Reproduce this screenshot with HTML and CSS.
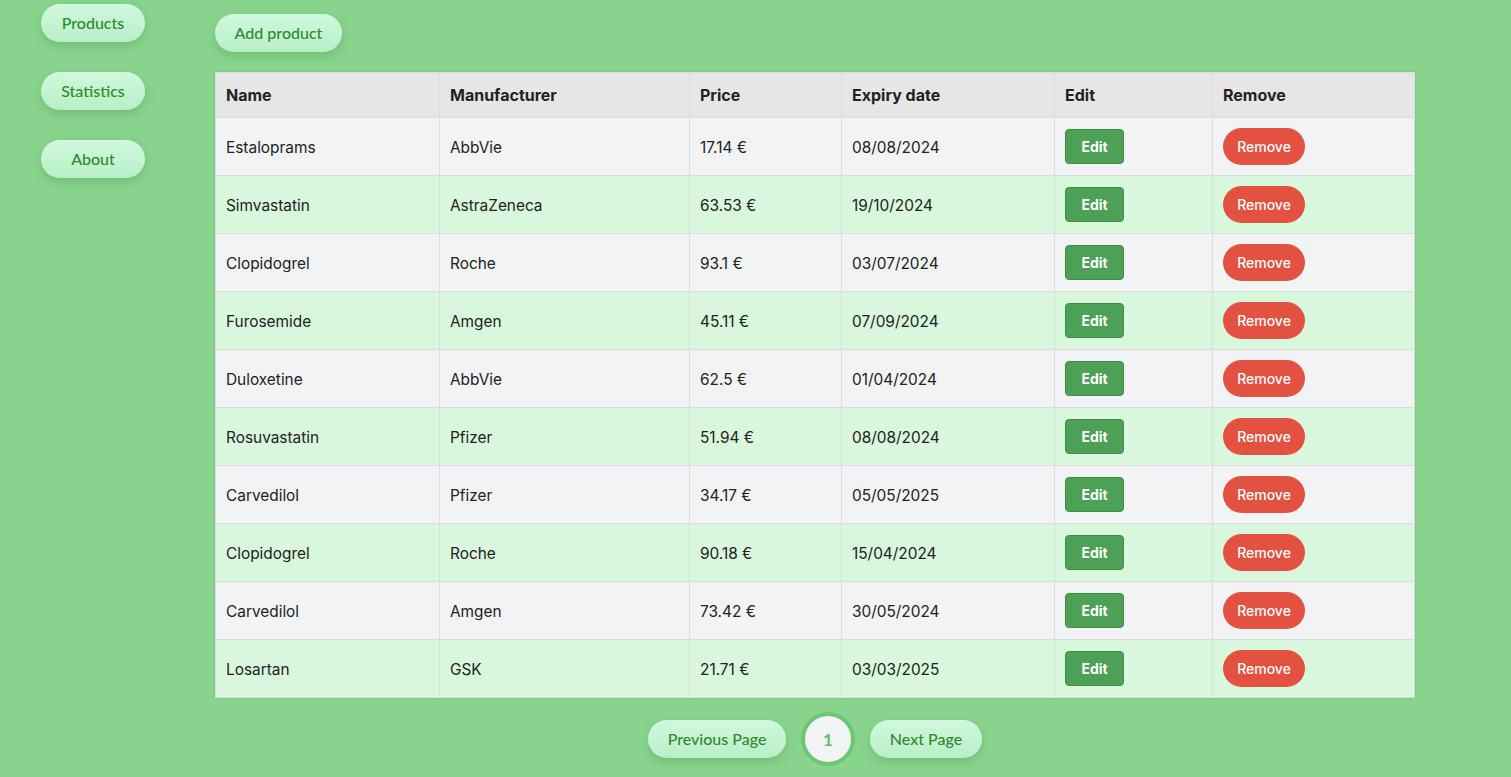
FILE: index.html
```html
<!DOCTYPE html>
<html>
<head>
<meta charset="utf-8">
<link rel="stylesheet" href="styles.css">
</head>
<body>
<div class="layout">
  <nav class="sidebar">
    <button class="pill">Products</button>
    <button class="pill">Statistics</button>
    <button class="pill">About</button>
  </nav>
  <main class="main">
    <button class="pill add">Add product</button>
    <table class="products">
      <thead>
        <tr><th class="c-name">Name</th><th class="c-man">Manufacturer</th><th class="c-price">Price</th><th class="c-exp">Expiry date</th><th class="c-edit">Edit</th><th class="c-rem">Remove</th></tr>
      </thead>
      <tbody>
        <tr><td>Estaloprams</td><td>AbbVie</td><td>17.14 €</td><td>08/08/2024</td><td><button class="edit">Edit</button></td><td><button class="remove">Remove</button></td></tr>
        <tr><td>Simvastatin</td><td>AstraZeneca</td><td>63.53 €</td><td>19/10/2024</td><td><button class="edit">Edit</button></td><td><button class="remove">Remove</button></td></tr>
        <tr><td>Clopidogrel</td><td>Roche</td><td>93.1 €</td><td>03/07/2024</td><td><button class="edit">Edit</button></td><td><button class="remove">Remove</button></td></tr>
        <tr><td>Furosemide</td><td>Amgen</td><td>45.11 €</td><td>07/09/2024</td><td><button class="edit">Edit</button></td><td><button class="remove">Remove</button></td></tr>
        <tr><td>Duloxetine</td><td>AbbVie</td><td>62.5 €</td><td>01/04/2024</td><td><button class="edit">Edit</button></td><td><button class="remove">Remove</button></td></tr>
        <tr><td>Rosuvastatin</td><td>Pfizer</td><td>51.94 €</td><td>08/08/2024</td><td><button class="edit">Edit</button></td><td><button class="remove">Remove</button></td></tr>
        <tr><td>Carvedilol</td><td>Pfizer</td><td>34.17 €</td><td>05/05/2025</td><td><button class="edit">Edit</button></td><td><button class="remove">Remove</button></td></tr>
        <tr><td>Clopidogrel</td><td>Roche</td><td>90.18 €</td><td>15/04/2024</td><td><button class="edit">Edit</button></td><td><button class="remove">Remove</button></td></tr>
        <tr><td>Carvedilol</td><td>Amgen</td><td>73.42 €</td><td>30/05/2024</td><td><button class="edit">Edit</button></td><td><button class="remove">Remove</button></td></tr>
        <tr><td>Losartan</td><td>GSK</td><td>21.71 €</td><td>03/03/2025</td><td><button class="edit">Edit</button></td><td><button class="remove">Remove</button></td></tr>
      </tbody>
    </table>
    <div class="pager">
      <button class="pill prev">Previous Page</button>
      <span class="page">1</span>
      <button class="pill next">Next Page</button>
    </div>
  </main>
</div>
</body>
</html>
```
FILE: styles.css
```css
html, body {
  margin: 0;
  padding: 0;
  background: #88d48c;
  height: 100%;
}
body {
  font-family: "Inter", "Liberation Sans", sans-serif;
  color: #222;
}
.layout {
  display: flex;
  align-items: flex-start;
}
.sidebar {
  display: flex;
  flex-direction: column;
  gap: 30px;
  padding: 4px 0 0 41px;
  width: 104px;
  margin-right: 70px;
}
.pill {
  font-family: "Lato", "Liberation Sans", sans-serif;
  font-size: 16px;
  font-weight: 500;
  color: #2e8a2c;
  height: 38px;
  border: none;
  border-radius: 19px;
  background: linear-gradient(#d0f8dd, #b8efc7);
  box-shadow: 0 4px 10px rgba(40, 110, 50, 0.22);
  padding: 0 0 2px 0;
  cursor: pointer;
}
.sidebar .pill {
  width: 104px;
}
.main {
  display: flex;
  flex-direction: column;
  padding-top: 14px;
  width: 1200px;
}
.add {
  width: 127px;
  margin-bottom: 20px;
}
.products {
  width: 1200px;
  border-collapse: collapse;
  font-size: 15.4px;
  box-shadow: 0 0 3px rgba(0, 0, 0, 0.12);
  border: 1px solid #dcdcdc;
}
.products th, .products td {
  border: 1px solid #dcdcdc;
  text-align: left;
  padding: 0 10px;
  color: #222;
}
.products th {
  height: 44px;
  background: #e6e6e6;
  font-weight: 700;
  font-size: 16px;
}
.products td {
  height: 56px;
  padding-top: 1px;
}
.products tbody tr:nth-child(odd) td {
  background: #f2f3f5;
}
.products tbody tr:nth-child(even) td {
  background: #d8f7dc;
}
.c-name { width: 203px; }
.c-man { width: 229px; }
.c-price { width: 131px; }
.c-exp { width: 192px; }
.c-edit { width: 137px; }
.edit {
  font-family: "Inter", "Liberation Sans", sans-serif;
  width: 59px;
  height: 35px;
  background: #4ca157;
  border: 1px solid #3e8e48;
  border-radius: 4px;
  color: #fff;
  font-weight: 700;
  font-size: 14px;
  padding: 0;
  display: block;
  margin-top: -1px;
}
.remove {
  font-family: "Inter", "Liberation Sans", sans-serif;
  width: 82px;
  height: 37px;
  background: #e35141;
  border: none;
  border-radius: 19px;
  color: #fff;
  font-size: 14px;
  font-weight: 500;
  padding: 0;
  display: block;
  margin-top: -1px;
}
.pager {
  display: flex;
  justify-content: center;
  align-items: center;
  gap: 15px;
  margin-top: 14px;
}
.prev { width: 138px; }
.next { width: 112px; }
.page {
  width: 46px;
  height: 46px;
  border-radius: 50%;
  border: 4px solid #6dc772;
  background: #f2f3f5;
  color: #5cbf62;
  font-family: "Lato", "Liberation Sans", sans-serif;
  font-size: 17px;
  font-weight: 700;
  display: flex;
  align-items: center;
  justify-content: center;
}
```
